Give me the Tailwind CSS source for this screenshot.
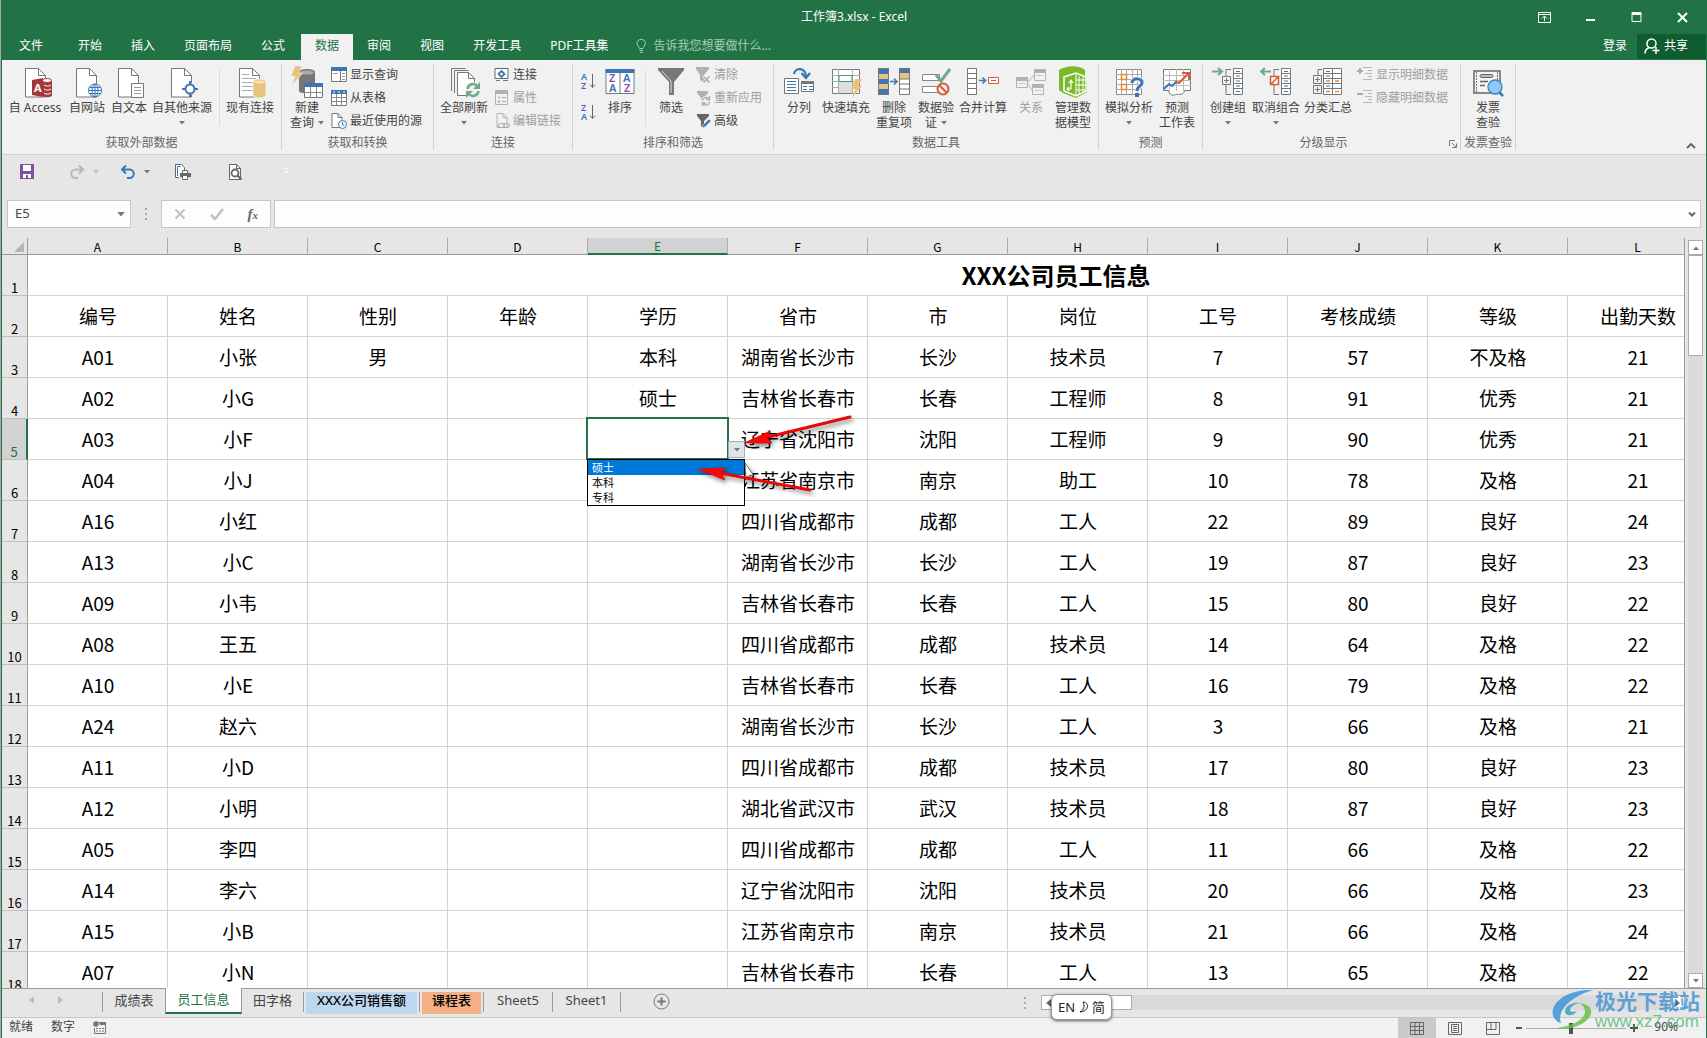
<!DOCTYPE html>
<html lang="zh-CN">
<head>
<meta charset="utf-8">
<title>工作簿3.xlsx - Excel</title>
<script src="https://cdn.jsdelivr.net/npm/@tailwindcss/browser@4"></script>
</head>
<body class="h-screen overflow-hidden bg-[#a9a9a9] pl-px font-['Noto_Sans','Noto_Sans_CJK_SC',sans-serif] text-xs text-[#444]">

<svg class="hidden" aria-hidden="true">
  <symbol id="doc" viewBox="0 0 22 30"><path d="M.5.5h13l7 7v21.500h-20z" fill="#fff" stroke="#777"/><path d="M13.500.5v7h7" fill="none" stroke="#777"/></symbol>
  <symbol id="down" viewBox="0 0 6 4"><path d="M0 0h6L3 3.500z" fill="#777"/></symbol>
  <symbol id="list" viewBox="0 0 10 28"><path d="M.5.5h9v26h-9z" fill="#fff" stroke="#777"/><path d="M0 5.500h10M0 10.500h10M0 15.500h10M0 20.500h10" stroke="#777"/></symbol>
</svg>

<div class="relative flex h-full flex-col border-x border-[#217346] bg-[#e6e6e6]">

  <!-- title bar -->
  <header class="bg-[#217346] text-white">
    <div class="grid h-[34px] grid-cols-[1fr_auto_1fr] items-center">
      <span></span>
      <h1 class="leading-4">工作簿3.xlsx - Excel</h1>
      <div class="flex justify-end gap-[6px] pr-1">
        <button class="grid h-8 w-10 place-items-center" aria-label="功能区显示选项"><svg class="h-[11px] w-[13px]" viewBox="0 0 13 11" fill="none" stroke="#fff"><path d="M.5.5h12v10H.5zM.5 2.500h12M6.500 9V4.500M4 6.500l2.500-2.500L9 6.500"/></svg></button>
        <button class="grid h-8 w-10 place-items-center" aria-label="最小化"><svg class="h-[11px] w-[11px]" viewBox="0 0 11 11"><path d="M1 7h9v2H1z" fill="#fff"/></svg></button>
        <button class="grid h-8 w-10 place-items-center" aria-label="最大化"><svg class="h-[11px] w-[11px]" viewBox="0 0 11 11"><path d="M1 .5h9v9H1zM1 2h9" fill="none" stroke="#fff"/><path d="M1 0h9v3H1z" fill="#fff"/></svg></button>
        <button class="grid h-8 w-10 place-items-center" aria-label="关闭"><svg class="h-[11px] w-[11px]" viewBox="0 0 11 11"><path d="M1 1l9 9M10 1l-9 9" stroke="#fff" stroke-width="2"/></svg></button>
      </div>
    </div>
    <nav class="flex h-[26px] items-stretch leading-[21px] *:pb-[3px]">
      <button class="pr-[21px] pl-[17px]">文件</button>
      <button class="pr-[15px] pl-[14px]">开始</button>
      <button class="pr-[15px] pl-[14px]">插入</button>
      <button class="pr-[15px] pl-[14px]">页面布局</button>
      <button class="pr-[15px] pl-[14px]">公式</button>
      <button class="ml-px bg-[#f1f1f1] px-[14px] text-[#217346]">数据</button>
      <button class="pr-[15px] pl-[14px]">审阅</button>
      <button class="pr-[15px] pl-[14px]">视图</button>
      <button class="pr-[15px] pl-[14px]">开发工具</button>
      <button class="pr-[15px] pl-[14px]">PDF工具集</button>
      <label class="flex items-center gap-[6px] pl-[13px]">
        <svg class="h-[14px] w-[11px]" viewBox="0 0 11 14" fill="none" stroke="#a6d0b7"><path d="M3.500 9.500C3.500 7.500 1 7 1 4.500a4.200 4 0 0 1 8.400 0C9.400 7 7 7.500 7 9.500zM3.500 11.500H7M4 13.500h2.500"/></svg>
        <input class="w-[130px] text-xs text-white placeholder:text-[#a6d0b7] outline-none" placeholder="告诉我您想要做什么..." aria-label="告诉我您想要做什么">
      </label>
      <div class="ml-auto flex">
        <button class="px-[10px]">登录</button>
        <button class="-mb-[2px] flex w-[69px] items-center gap-1 bg-[#0e5c2f] pb-[2px] pl-[7px]">
          <svg class="h-4 w-4" viewBox="0 0 16 16" fill="none" stroke="#fff" stroke-width="1.500"><circle cx="7.500" cy="5.500" r="4.500"/><path d="M1 15.500c0-3.500 2-5 4-6M12 9v7M8.500 12.500h7"/></svg>共享</button>
      </div>
    </nav>
  </header>

  <!-- ribbon -->
  <div class="flex h-[95px] border-b border-[#d2d2d2] bg-[#f1f1f1] leading-[15px] whitespace-nowrap">

    <section class="my-1 flex w-[280px] flex-col border-r border-[#d2d2d2]">
      <div class="flex h-[73px] gap-[2px] pt-[2px] pl-[3px]">
        <button class="flex w-[60px] flex-col items-center gap-[2px]">
          <svg class="h-8 w-8 overflow-visible" viewBox="0 0 32 32"><use href="#doc" x="6" y="2" width="22" height="30"/><path d="M24 15v14c0 3 9 3 9 0V15" fill="#a4373a"/><path d="M23 13.500h8v17h-8z" fill="#a4373a"/><ellipse cx="28" cy="14.500" rx="4.500" ry="2" fill="#fff" stroke="#a4373a"/><path d="M25 19c2 1.500 5 1.500 7 0M25 23c2 1.500 5 1.500 7 0M25 27c2 1.500 5 1.500 7 0" stroke="#fff" fill="none"/><path d="M13 14l11-2v19l-11-2z" fill="#a4373a"/><text x="15" y="26" font-size="11" font-weight="700" fill="#fff">A</text></svg>
          <span>自 Access</span></button>
        <button class="flex w-10 flex-col items-center gap-[2px]">
          <svg class="h-8 w-8" viewBox="0 0 32 32"><use href="#doc" x="5" y="2" width="22" height="30"/><circle cx="24" cy="24.500" r="6.500" fill="#fff" stroke="#3c76b4"/><ellipse cx="24" cy="24.500" rx="3" ry="6.500" fill="none" stroke="#3c76b4"/><path d="M17.500 24.500h13M24 18v13M18.500 21.500h11M18.500 27.500h11" stroke="#3c76b4"/></svg>
          <span>自网站</span></button>
        <button class="flex w-10 flex-col items-center gap-[2px]">
          <svg class="h-8 w-8" viewBox="0 0 32 32"><use href="#doc" x="5" y="2" width="22" height="30"/><path d="M18.500 17.500h12v14h-12z" fill="#fff" stroke="#777"/><path d="M21 21.500h7M21 24.500h7M21 27.500h7" stroke="#999"/></svg>
          <span>自文本</span></button>
        <button class="flex w-[62px] flex-col items-center gap-[2px]">
          <svg class="h-8 w-8" viewBox="0 0 32 32"><use href="#doc" x="5" y="2" width="22" height="30"/><circle cx="24" cy="23" r="6" fill="#f1f1f1"/><circle cx="24" cy="23" r="4.500" fill="#fff" stroke="#3c76b4" stroke-width="2"/><path d="M24 15v4M24 27v4M16 23h4M28 23h4" stroke="#3c76b4" stroke-width="2"/></svg>
          <span>自其他来源</span><svg class="mt-1 h-1 w-[6px]"><use href="#down"/></svg></button>
        <span class="mx-1 mt-1 h-14 w-px bg-[#dcdcdc]"></span>
        <button class="flex w-12 flex-col items-center gap-[2px]">
          <svg class="h-8 w-8" viewBox="0 0 32 32"><use href="#doc" x="5" y="2" width="22" height="30"/><path d="M8 8.500h7M8 12.500h14M8 16.500h14M8 20.500h11M8 24.500h11" stroke="#aaa"/><path d="M19 16c0-4 13-4 13 0v13c0 4-13 4-13 0z" fill="#eac37a" stroke="#f1f1f1"/><ellipse cx="25.500" cy="16" rx="5" ry="1.500" fill="#f8e2b4"/></svg>
          <span>现有连接</span></button>
      </div>
      <h2 class="text-center text-[#666]">获取外部数据</h2>
    </section>

    <section class="my-1 flex w-[152px] flex-col border-r border-[#d2d2d2]">
      <div class="flex h-[73px] pl-[3px]">
        <button class="flex w-[44px] flex-col items-center gap-[2px] pt-[2px]">
          <svg class="h-8 w-8" viewBox="0 0 32 32"><path d="M8 6c0-4 16-4 16 0v19c0 3-16 3-16 0z" fill="#777"/><ellipse cx="16" cy="6.500" rx="7" ry="2" fill="#aaa"/><path d="M4 0h7L8 7h4L1 19l3-9H0z" fill="#eac37a" stroke="#f1f1f1" stroke-width=".5"/><path d="M13.500 17.500h18v14h-18z" fill="#fff" stroke="#777"/><path d="M13 17h19v4H13z" fill="#3c76b4"/><path d="M13 26.500h19M19.500 21v11M25.500 21v11" stroke="#888"/></svg>
          <span>新建</span><span class="-mt-[2px] flex items-center gap-1">查询<svg class="h-1 w-[6px]"><use href="#down"/></svg></span></button>
        <div class="-mt-px flex flex-col pl-[2px]">
          <button class="flex h-[23px] items-center gap-[3px]"><svg class="h-4 w-4" viewBox="0 0 16 16"><path d="M.5.5h15v14H.5z" fill="#fff" stroke="#777"/><path d="M0 0h16v4H0z" fill="#3c76b4"/><path d="M9.500 4v11" stroke="#777"/><path d="M2 6.500h5M11 6.500h3M11 9.500h3M11 12.500h3" stroke="#999"/></svg>显示查询</button>
          <button class="flex h-[23px] items-center gap-[3px]"><svg class="h-4 w-4" viewBox="0 0 16 16"><path d="M.5.5h15v15H.5z" fill="#fff" stroke="#777"/><path d="M0 0h16v4H0z" fill="#3c76b4"/><path d="M2 2h2M7 2h2M12 2h2" stroke="#fff"/><path d="M0 7.500h16M0 11.500h16M5.500 4v12M10.500 4v12" stroke="#888"/></svg>从表格</button>
          <button class="flex h-[23px] items-center gap-[3px]"><svg class="h-4 w-4" viewBox="0 0 16 16"><path d="M1 .5h6l4 4v10H1z" fill="#fff" stroke="#777"/><path d="M7 .5v4h4" fill="none" stroke="#777"/><circle cx="11.500" cy="11.500" r="4" fill="#fff" stroke="#3c76b4"/><path d="M11.500 9v3h2" fill="none" stroke="#3c76b4"/></svg>最近使用的源</button>
        </div>
      </div>
      <h2 class="text-center text-[#666]">获取和转换</h2>
    </section>

    <section class="my-1 flex w-[139px] flex-col border-r border-[#d2d2d2]">
      <div class="flex h-[73px] pl-[5px]">
        <button class="flex w-[50px] flex-col items-center gap-[2px] pt-[2px]">
          <svg class="h-8 w-8" viewBox="0 0 32 32"><path d="M3.500 25V2.500h14" fill="none" stroke="#777"/><path d="M6.500 27V4.500h14" fill="none" stroke="#777"/><path d="M9.500 6.500h11l6 6v17h-17z" fill="#fff" stroke="#777"/><path d="M20.500 6.500v6h6" fill="none" stroke="#777"/><circle cx="25" cy="24" r="8" fill="#f1f1f1"/><path d="M19.500 23a5.500 5.500 0 0 1 10-2.500M30.500 25a5.500 5.500 0 0 1-10 2.500" fill="none" stroke="#72a98d" stroke-width="2.500"/><path d="M32 16v7h-7zM18 32v-7h7z" fill="#72a98d"/></svg>
          <span>全部刷新</span><svg class="mt-1 h-1 w-[6px]"><use href="#down"/></svg></button>
        <div class="-mt-px flex flex-col pl-[5px]">
          <button class="flex h-[23px] items-center gap-[3px]"><svg class="h-4 w-4" viewBox="0 0 16 16"><path d="M1 1.500h13v10H1z" fill="#fff" stroke="#666"/><path d="M2 13.500h4M9 13.500h5" stroke="#777"/><path d="M7.500 4l3 3-3 3-3-3z" fill="none" stroke="#3c76b4" stroke-width="1.800"/></svg>连接</button>
          <button class="flex h-[23px] items-center gap-[3px] text-[#a0a0a0]"><svg class="h-4 w-4" viewBox="0 0 16 16"><path d="M1.500.5h12v14h-12z" fill="#f6f0f6" stroke="#b5b0b5"/><path d="M1 0h13v4H1z" fill="#b5b0b5"/><path d="M8 7.500h4M8 11.500h4" stroke="#aaa"/><circle cx="5" cy="7.500" r="1" fill="#aaa"/><circle cx="5" cy="11.500" r="1" fill="none" stroke="#aaa"/></svg>属性</button>
          <button class="flex h-[23px] items-center gap-[3px] text-[#a0a0a0]"><svg class="h-4 w-4" viewBox="0 0 16 16"><path d="M3 .5h6l4 4v10H3z" fill="#f6eef6" stroke="#b5b0b5"/><path d="M9 .5v4h4" fill="none" stroke="#b5b0b5"/><rect x="4.500" y="10.500" width="6" height="4" rx="2" fill="#f1f1f1" stroke="#a5a5a5"/><rect x="9.500" y="10.500" width="6" height="4" rx="2" fill="none" stroke="#a5a5a5"/></svg>编辑链接</button>
        </div>
      </div>
      <h2 class="text-center text-[#666]">连接</h2>
    </section>

    <section class="my-1 flex w-[201px] flex-col border-r border-[#d2d2d2]">
      <div class="flex h-[73px] pl-2">
        <div class="flex w-4 flex-col gap-[15px] pt-[9px]">
          <button aria-label="升序"><svg class="h-4 w-4 overflow-visible" viewBox="0 0 16 16"><text x="0" y="7" font-size="9" font-weight="600" fill="#3c76b4">A</text><text x="0" y="16" font-size="9" font-weight="600" fill="#8a50a8">Z</text><path d="M11.500 1v13M9 11.500l2.500 3 2.500-3" fill="none" stroke="#666"/></svg></button>
          <button aria-label="降序"><svg class="h-4 w-4 overflow-visible" viewBox="0 0 16 16"><text x="0" y="7" font-size="9" font-weight="600" fill="#8a50a8">Z</text><text x="0" y="16" font-size="9" font-weight="600" fill="#3c76b4">A</text><path d="M11.500 1v13M9 11.500l2.500 3 2.500-3" fill="none" stroke="#666"/></svg></button>
        </div>
        <button class="flex w-[46px] flex-col items-center gap-[2px] pt-[2px]">
          <svg class="h-8 w-8" viewBox="0 0 32 32"><path d="M2 3.500h28v24H2z" fill="#fff" stroke="#777"/><path d="M1.500 3h29v4h-29z" fill="#3c76b4"/><path d="M16 7v20" stroke="#777"/><g font-size="11" font-weight="600"><text x="5" y="16" fill="#8a50a8">Z</text><text x="5" y="26" fill="#3c76b4">A</text><text x="19" y="16" fill="#3c76b4">A</text><text x="20" y="26" fill="#8a50a8">Z</text></g></svg>
          <span>排序</span></button>
        <span class="mt-[6px] mr-[5px] ml-[2px] h-14 w-px bg-[#dcdcdc]"></span>
        <button class="flex w-10 flex-col items-center gap-[2px] pt-[2px]">
          <svg class="h-8 w-8" viewBox="0 0 32 32"><path d="M3 2h26v2L19 16v13h-5V16L3 4z" fill="#777"/><path d="M7 5l9 10v12" fill="none" stroke="#ddd"/></svg>
          <span>筛选</span></button>
        <div class="-mt-px flex flex-col pl-1">
          <button class="flex h-[23px] items-center gap-[3px] text-[#a0a0a0]"><svg class="h-4 w-4" viewBox="0 0 16 16"><path d="M1 0h13v2L9 8v7l-4-2V8L1 2z" fill="#b0b0b0"/><path d="M8 9l7 7M15 9l-7 7" stroke="#f1f1f1" stroke-width="3"/><path d="M8.500 9.500l6 6M14.500 9.500l-6 6" stroke="#aaa" stroke-width="1.500"/></svg>清除</button>
          <button class="flex h-[23px] items-center gap-[3px] text-[#a0a0a0]"><svg class="h-4 w-4" viewBox="0 0 16 16"><path d="M2 1h11v2L9 8v6l-3-1V8L2 3z" fill="#b0b0b0"/><circle cx="11" cy="11" r="5" fill="#f1f1f1"/><path d="M7.500 10.500a3.500 3.500 0 0 1 6-2M14.500 11.500a3.500 3.500 0 0 1-6 2.500M14.500 6v3.500H11M7.500 16v-3H11" fill="none" stroke="#aaa" stroke-width="1.300"/></svg>重新应用</button>
          <button class="flex h-[23px] items-center gap-[3px]"><svg class="h-4 w-4" viewBox="0 0 16 16"><path d="M2 1h12v2L9 8v7l-3-2V8L2 3z" fill="#666"/><path d="M7 15l1-3 6-6 2 2-6 6z" fill="#3c76b4" stroke="#f1f1f1" stroke-width=".6"/></svg>高级</button>
        </div>
      </div>
      <h2 class="text-center text-[#666]">排序和筛选</h2>
    </section>

    <section class="my-1 flex w-[325px] flex-col border-r border-[#d2d2d2]">
      <div class="flex h-[73px] pt-[2px] pl-[7px]">
        <button class="flex w-9 flex-col items-center gap-[2px]">
          <svg class="h-8 w-8" viewBox="0 0 32 32"><path d="M1.500 12.500h14v15h-14z" fill="#fff" stroke="#777"/><path d="M4 15.500h9M4 18.500h9M4 21.500h9M4 24.500h9" stroke="#3c76b4"/><path d="M18.500 15.500h12v10h-12z" fill="#fff" stroke="#777"/><path d="M18 15h13v3H18z" fill="#777"/><path d="M20 20.500h4M26 20.500h4M20 23.500h4M26 23.500h4" stroke="#3c76b4"/><path d="M11 8c1-7 12-7 12 3M18.500 7l4.500 5 4-5" fill="none" stroke="#3c76b4" stroke-width="2.200"/></svg>
          <span>分列</span></button>
        <button class="flex w-[58px] flex-col items-center gap-[2px]">
          <svg class="h-8 w-8" viewBox="0 0 32 32"><path d="M2.500 3.500h27v24h-27z" fill="#fff" stroke="#777"/><path d="M2 9.500h28M2 15.500h28M2 21.500h28M8.500 3v25M22.500 3v25" stroke="#aaa"/><path d="M9 16h13v11H9z" fill="#ddd"/><path d="M9 9.500h13v6H9z" fill="#fff" stroke="#3f9a78"/><path d="M25 13h7l-4 7h4l-10 12 3-9h-4z" fill="#eac37a"/></svg>
          <span>快速填充</span></button>
        <button class="flex w-[38px] flex-col items-center gap-[2px]">
          <svg class="h-8 w-8" viewBox="0 0 32 32"><path d="M0 2h11v27H0z" fill="#3c76b4"/><path d="M0 8h11v5H0zM0 18h11v5H0z" fill="#eac37a"/><path d="M.5 2.500h10v26H.5z" fill="none" stroke="#777"/><path d="M21 2h11v5H21z" fill="#3c76b4"/><path d="M21 7h11v6H21z" fill="#eac37a"/><path d="M21 13h11v15H21z" fill="#fff"/><path d="M21.500 2.500h10v26h-10zM21 13h11M21 18h11M21 23h11" fill="none" stroke="#777"/><path d="M12 15.500h7M16 12.500l3 3-3 3" fill="none" stroke="#3c76b4" stroke-width="1.600"/></svg>
          <span class="text-center">删除<br>重复项</span></button>
        <button class="flex w-[46px] flex-col items-center gap-[2px]">
          <svg class="h-8 w-8" viewBox="0 0 32 32"><path d="M2.500 8.500h17v6h-17zM2.500 20.500h17v6h-17z" fill="#fff" stroke="#888"/><path d="M16 9l5 6 9-12" fill="none" stroke="#72a98d" stroke-width="3"/><circle cx="23" cy="23" r="5.500" fill="#f1f1f1" stroke="#d8593b" stroke-width="2"/><path d="M19 19l8 8" stroke="#d8593b" stroke-width="2"/></svg>
          <span>数据验</span><span class="-mt-[2px] flex items-center gap-1">证<svg class="h-1 w-[6px]"><use href="#down"/></svg></span></button>
        <button class="flex w-12 flex-col items-center gap-[2px]">
          <svg class="h-8 w-8" viewBox="0 0 32 32"><use href="#list" x="0" y="2" width="10" height="28"/><path d="M12 14.500h6M15.500 11.500l3 3-3 3" fill="none" stroke="#3c76b4" stroke-width="1.600"/><path d="M21.500 11.500h10v6h-10z" fill="#fff" stroke="#d8593b"/><path d="M24 14.500h5" stroke="#d8593b"/></svg>
          <span>合并计算</span></button>
        <button class="flex w-12 flex-col items-center gap-[2px] text-[#a0a0a0]">
          <svg class="h-8 w-8" viewBox="0 0 32 32"><g fill="#f6f0f6" stroke="#b5b0b5"><path d="M12 17l8-9M12 17l6 8"/><path d="M1.500 11.500h11v10h-11zM19.500 3.500h11v11h-11zM17.500 18.500h11v10h-11z"/></g><path d="M1 11h12v4H1zM19 3h12v4H19zM17 18h12v4H17z" fill="#b5b0b5"/><path d="M3 17.500h8M21 9.500h7M19 24.500h7" stroke="#c8c4c8"/></svg>
          <span>关系</span></button>
        <button class="flex w-9 flex-col items-center gap-[2px]">
          <svg class="h-8 w-8" viewBox="0 0 32 32"><path d="M2 4c8-5 20-5 26 0v6l2 2v14l-11 6-13-5-4-3z" fill="#7aba28"/><path d="M7 11l12-4 10 4v14l-10 5-12-5z" fill="#7aba28" stroke="#fff" stroke-width="1.500"/><path d="M19 8v21M22 10v18M26 11v15M19 14h10M19 19h10M19 24h9" stroke="#fff"/><path d="M11 23h3v-8M12 17l2-3 2 3M12 21l-2 2 2 2" stroke="#fff" fill="none" stroke-width="1.200"/></svg>
          <span class="text-center">管理数<br>据模型</span></button>
      </div>
      <h2 class="text-center text-[#666]">数据工具</h2>
    </section>

    <section class="my-1 flex w-[104px] flex-col border-r border-[#d2d2d2]">
      <div class="flex h-[73px] pt-[2px] pl-[5px]">
        <button class="flex w-[50px] flex-col items-center gap-[2px]">
          <svg class="h-8 w-8" viewBox="0 0 32 32"><path d="M3.500 3.500h25v25h-25z" fill="#fff" stroke="#888"/><path d="M3 8.500h26M3 13.500h26M3 18.500h26M3 23.500h26M8.500 3v26M13.500 3v26M19.500 3v26M24.500 3v26" stroke="#aaa"/><path d="M8.500 8.500h5v5h-5zM8.500 18.500h5v5h-5z" fill="#fff" stroke="#e08a3c" stroke-width="1.500"/><path d="M19 17c0-6 11-5 10 0 0 3-5 4-5 9" fill="none" stroke="#f1f1f1" stroke-width="5"/><path d="M19 17c0-6 11-5 10 0 0 3-5 3-5 8" fill="none" stroke="#3c76b4" stroke-width="3"/><path d="M22 27h4v4h-4z" fill="#3c76b4"/></svg>
          <span>模拟分析</span><svg class="mt-1 h-1 w-[6px]"><use href="#down"/></svg></button>
        <button class="flex w-[46px] flex-col items-center gap-[2px]">
          <svg class="h-8 w-8" viewBox="0 0 32 32"><path d="M2.500 3.500h27v21h-6c-1 6-8 3-9 4-4 2-6 0-7-4h-5z" fill="#fff" stroke="#777"/><path d="M2 9.500h28M2 14.500h28M2 19.500h28M8.500 3v22M15.500 3v22M22.500 3v22" stroke="#bbb"/><path d="M3 23l5-5 3 2 5-5" fill="none" stroke="#3c76b4" stroke-width="2"/><path d="M15 16l3 1 9-9M21 7h7v7" fill="none" stroke="#d8593b" stroke-width="2"/></svg>
          <span class="text-center">预测<br>工作表</span></button>
      </div>
      <h2 class="text-center text-[#666]">预测</h2>
    </section>

    <section class="my-1 flex w-[258px] flex-col border-r border-[#d2d2d2]">
      <div class="flex h-[73px] pl-[3px]">
        <button class="flex w-11 flex-col items-center gap-[2px] pt-[2px]">
          <svg class="h-8 w-8" viewBox="0 0 32 32"><path d="M0 5.500h9M6 2l4 3.500L6 9" fill="none" stroke="#72a98d" stroke-width="2.200"/><path d="M19 3.500h-5V10M14 19v9.500h5" fill="none" stroke="#777"/><path d="M10.500 10.500h8v8h-8zM12 14.500h5M14.500 12v5" fill="none" stroke="#777"/><use href="#list" x="21" y="2" width="10" height="28"/><path d="M24 5.500h4M24 10h4M24 15h4M24 20h4M24 25.500h4" stroke="#3c76b4"/></svg>
          <span>创建组</span><svg class="mt-1 h-1 w-[6px]"><use href="#down"/></svg></button>
        <button class="flex w-[52px] flex-col items-center gap-[2px] pt-[2px]">
          <svg class="h-8 w-8" viewBox="0 0 32 32"><path d="M11 5.500H2M5 2L1 5.500 5 9" fill="none" stroke="#72a98d" stroke-width="2.200"/><path d="M19 3.500h-5V10M14 19v9.500h5" fill="none" stroke="#777"/><path d="M10.500 10.500h8v8h-8zM11 18l7-7" fill="#fff" stroke="#d8593b" stroke-width="1.500"/><use href="#list" x="21" y="2" width="10" height="28"/><path d="M24 5.500h4M24 10h4M24 15h4M24 20h4M24 25.500h4" stroke="#3c76b4"/></svg>
          <span>取消组合</span><svg class="mt-1 h-1 w-[6px]"><use href="#down"/></svg></button>
        <button class="flex w-[52px] flex-col items-center gap-[2px] pt-[2px]">
          <svg class="h-8 w-8" viewBox="0 0 32 32"><path d="M10 3.500H6V9" fill="none" stroke="#777"/><path d="M1.500 9.500h8v8h-8zM1.500 19.500h8v8h-8zM3 13.500h5M5.500 11v5M3 23.500h5M5.500 21v5" fill="none" stroke="#777"/><use href="#list" x="11" y="2" width="10" height="28"/><use href="#list" x="20" y="2" width="10" height="28"/><path d="M14 5.500h4M14 10h4M14 20h4" stroke="#3c76b4"/><path d="M14 15h4M14 25.500h4M23 15h4M23 25.500h4" stroke="#e08a3c" stroke-width="1.500"/></svg>
          <span>分类汇总</span></button>
        <div class="-mt-px flex flex-col pl-[3px] text-[#a0a0a0]">
          <button class="flex h-[23px] items-center gap-[3px]"><svg class="h-4 w-4" viewBox="0 0 16 16"><path d="M0 4h6M3 1v6" stroke="#aaa" stroke-width="2"/><path d="M6 .5h9M11 3.500h4M8 6.500h7M11 9.500h4M6 12.500h9" stroke="#b5b5b5"/></svg>显示明细数据</button>
          <button class="flex h-[23px] items-center gap-[3px]"><svg class="h-4 w-4" viewBox="0 0 16 16"><path d="M0 4h6" stroke="#aaa" stroke-width="2"/><path d="M6 .5h9M11 3.500h4M8 6.500h7M11 9.500h4M6 12.500h9" stroke="#b5b5b5"/></svg>隐藏明细数据</button>
        </div>
      </div>
      <div class="grid grid-cols-[1fr_auto_1fr]">
        <h2 class="col-start-2 pr-4 text-[#666]">分级显示</h2>
        <button class="mt-[3px] mr-[3px] justify-self-end" aria-label="分级显示设置"><svg class="h-2 w-2" viewBox="0 0 8 8" fill="none" stroke="#777"><path d="M.5 6V.5H6M3 3l4 4M7.500 3.500v4h-4"/></svg></button>
      </div>
    </section>

    <section class="my-1 flex w-[55px] flex-col border-r border-[#d2d2d2]">
      <div class="flex h-[73px] justify-center pt-[2px]">
        <button class="flex flex-col items-center gap-[2px]">
          <svg class="h-8 w-8" viewBox="0 0 32 32"><path d="M2 5h26v22H2z" fill="#f4f4f4" stroke="#666" stroke-width="1.500"/><path d="M4.500 6v20M25.500 6v20" stroke="#777" stroke-dasharray="2 1"/><rect x="8" y="8.500" width="13" height="3" rx="1.500" fill="#bbb" stroke="#666"/><path d="M8 15.500h8M8 19.500h5" stroke="#666" stroke-width="1.500"/><path d="M27 26l4 4" stroke="#3579ad" stroke-width="2.500"/><circle cx="23" cy="21" r="7" fill="#92c5f7" stroke="#3a86b8" stroke-width="1.300"/></svg>
          <span class="text-center">发票<br>查验</span></button>
      </div>
      <h2 class="text-center text-[#666]">发票查验</h2>
    </section>
    <button class="mt-auto mr-[10px] mb-[5px] ml-auto" aria-label="折叠功能区"><svg class="h-[6px] w-[10px]" viewBox="0 0 10 6" fill="none" stroke="#666" stroke-width="2"><path d="M1 5l4-4 4 4"/></svg></button>
  </div>

  <!-- quick access bar -->
  <div class="flex h-[35px] items-center pb-[2px] pl-[18px] text-[#666]">
    <button aria-label="保存"><svg class="h-[15px] w-[14px]" viewBox="0 0 14 15"><path d="M0 0h14v15H0z" fill="#8250a0"/><path d="M3 1h8v6H3zM3 10h8v4H3z" fill="#fff"/><path d="M6 11h2v3H6z" fill="#8250a0"/></svg></button>
    <button class="ml-9 flex items-center gap-[9px] opacity-60" aria-label="恢复"><svg class="h-[14px] w-[14px]" viewBox="0 0 14 14" fill="none" stroke="#999" stroke-width="2"><path d="M8 13H5.500a4 4 0 0 1 0-8.500H13M9 .5l4 4-4 4"/></svg><svg class="h-1 w-[6px] opacity-60"><use href="#down"/></svg></button>
    <button class="ml-[22px] flex items-center gap-[9px]" aria-label="撤消"><svg class="h-[14px] w-[14px]" viewBox="0 0 14 14" fill="none" stroke="#3c76b4" stroke-width="2"><path d="M6 13h2.500a4 4 0 0 0 0-8.500H1M5 .5l-4 4 4 4"/></svg><svg class="h-1 w-[6px]"><use href="#down"/></svg></button>
    <button class="ml-6" aria-label="快速打印"><svg class="h-4 w-[17px]" viewBox="0 0 17 16" fill="none" stroke="#666"><path d="M5 13.500H1.500V.5h6l3 3v4" fill="#fff"/><path d="M3.500 12V3" stroke="#3c76b4"/><path d="M3.500 2.500h3" stroke="#3c76b4"/><path d="M6 9h11v4H6z" fill="#666" stroke="none"/><path d="M8.500 6.500h5v3h-5zM8.500 11.500h5v4h-5z" fill="#fff"/></svg></button>
    <button class="ml-9" aria-label="打印预览"><svg class="h-4 w-4" viewBox="0 0 16 16" fill="none" stroke="#666"><path d="M2.500.5h7l4 4v11h-11z" fill="#fff"/><path d="M9.500.5v4h4"/><circle cx="8" cy="9" r="3.500" stroke-width="1.800"/><path d="M10.500 11.500l4 4" stroke-width="2.200"/></svg></button>
    <button class="ml-10" aria-label="自定义快速访问工具栏"><svg class="h-[7px] w-[6px]" viewBox="0 0 6 7"><path d="M0 0h6v1H0zM0 3h6L3 6z" fill="#f6f6f6"/></svg></button>
  </div>

  <!-- formula bar -->
  <div class="flex h-[48px] items-start pt-[10px] pr-[5px] pl-[5px]">
    <div class="flex h-7 w-[124px] items-center border border-[#c6c6c6] bg-[#fdfdfd] pr-[5px] pl-[7px]">
      <input class="w-full min-w-0 text-[13px] outline-none" value="E5" aria-label="名称框">
      <button aria-label="名称列表"><svg class="h-[5px] w-2"><use href="#down"/></svg></button>
    </div>
    <svg class="mt-2 ml-[14px] h-3 w-[2px]" viewBox="0 0 2 12"><path d="M0 0h2v2H0zM0 5h2v2H0zM0 10h2v2H0z" fill="#aaa"/></svg>
    <div class="ml-[14px] flex h-7 w-[110px] items-center justify-around border border-[#c6c6c6] bg-[#fdfdfd]">
      <button aria-label="取消"><svg class="h-3 w-3" viewBox="0 0 12 12"><path d="M1.500 1.500l9 9M10.500 1.500l-9 9" stroke="#c0c0c0" stroke-width="2"/></svg></button>
      <button aria-label="输入"><svg class="h-3 w-[14px]" viewBox="0 0 14 12"><path d="M1 7l4 4 8-10" fill="none" stroke="#c0c0c0" stroke-width="2.500"/></svg></button>
      <button class="font-['Liberation_Serif',serif] text-[15px] leading-4 font-bold text-[#666] italic" aria-label="插入函数">f<span class="text-[11px]">x</span></button>
    </div>
    <div class="ml-[3px] flex h-7 flex-1 items-center border border-[#c6c6c6] bg-[#fdfdfd] pr-1">
      <input class="w-full text-[13px] outline-none" aria-label="编辑栏">
      <button aria-label="展开编辑栏"><svg class="h-[5px] w-2" viewBox="0 0 8 5" fill="none" stroke="#666" stroke-width="2"><path d="M1 .5l3 3 3-3"/></svg></button>
    </div>
  </div>

  <!-- worksheet -->
  <div class="flex min-h-0 flex-1 border-b border-[#9b9b9b]">
    <main class="min-w-0 flex-1 overflow-hidden border-r border-[#9b9b9b]">
      <table class="w-[2082px] table-fixed border-separate border-spacing-0 text-center font-['Noto_Sans_CJK_SC',sans-serif] text-[19px] leading-[27px] whitespace-nowrap text-black">
        <colgroup>
          <col class="w-[26px]"><col span="12" class="w-[140px]"><col>
        </colgroup>
        <thead id="heads" class="text-xs leading-4"></thead>
        <tbody id="rows" class="bg-white"></tbody>
      </table>
    </main>
    <div class="mt-[2px] mr-[3px] ml-[3px] flex w-[15px] flex-col bg-[#dadada]">
      <button class="grid h-[15px] place-items-center border border-[#ababab] bg-white" aria-label="向上滚动"><svg class="h-1 w-[6px] rotate-180"><use href="#down"/></svg></button>
      <div class="h-[101px] border border-[#ababab] bg-white"></div>
      <button class="mt-auto grid h-[15px] place-items-center border border-[#ababab] bg-white" aria-label="向下滚动"><svg class="h-1 w-[6px]"><use href="#down"/></svg></button>
    </div>
  </div>

  <!-- sheet tabs -->
  <div class="flex h-7 items-start text-[13px] leading-[22px]">
    <div class="flex h-full w-[100px] items-center gap-6 pb-[6px] pl-[27px] text-[#bdbdbd]">
      <button aria-label="上一张工作表"><svg class="h-2 w-[5px]" viewBox="0 0 5 8"><path d="M5 0v8L0 4z" fill="currentColor"/></svg></button>
      <button aria-label="下一张工作表"><svg class="h-2 w-[5px]" viewBox="0 0 5 8"><path d="M0 0v8l5-4z" fill="currentColor"/></svg></button>
    </div>
    <button class="mt-[3px] h-5 w-[63px] border-l border-[#9b9b9b] pb-1 leading-4">成绩表</button>
    <button class="-mt-px h-[26px] w-[77px] border-x border-b-2 border-x-[#9b9b9b] border-b-[#217346] bg-white pb-[2px] text-[#217346]">员工信息</button>
    <button class="mt-[3px] h-5 w-[62px] border-r border-[#9b9b9b] pb-1 leading-4">田字格</button>
    <div class="mx-[2px] mt-[3px] flex h-[22px] gap-[2px] leading-4 text-black">
      <button class="w-[111px] bg-[#bdd7ee] pb-[6px] font-medium">XXX公司销售额</button>
      <span class="h-5 w-px bg-[#9b9b9b]"></span>
      <button class="w-[59px] bg-[#f4b084] pb-[6px] font-medium">课程表</button>
    </div>
    <button class="mt-[3px] h-5 w-[70px] border-x border-[#9b9b9b] pb-1 leading-4">Sheet5</button>
    <button class="mt-[3px] h-5 w-[68px] border-r border-[#9b9b9b] pb-1 leading-4">Sheet1</button>
    <button class="mt-1 ml-8" aria-label="新工作表"><svg class="h-[17px] w-[17px]" viewBox="0 0 17 17" fill="none" stroke="#777"><circle cx="8.500" cy="8.500" r="7.500"/><path d="M8.500 4.500v8M4.500 8.500h8" stroke-width="2"/></svg></button>
    <svg class="mt-2 ml-auto h-3 w-[2px]" viewBox="0 0 2 12"><path d="M0 0h2v2H0zM0 5h2v2H0zM0 10h2v2H0z" fill="#aaa"/></svg>
    <div class="relative mt-[6px] mr-[21px] ml-[15px] flex h-[15px] w-[644px] bg-[#dadada] text-[#666]">
      <button class="grid w-[15px] place-items-center border border-[#ababab] bg-white" aria-label="向左滚动"><svg class="h-2 w-[5px]" viewBox="0 0 5 8"><path d="M5 0v8L0 4z" fill="currentColor"/></svg></button>
      <div class="w-[76px] border border-l-0 border-[#ababab] bg-white"></div>
      <button class="ml-auto grid w-[15px] place-items-center border border-[#ababab] bg-white" aria-label="向右滚动"><svg class="h-2 w-[5px]" viewBox="0 0 5 8"><path d="M0 0v8l5-4z" fill="currentColor"/></svg></button>
      <div class="absolute -top-px left-[10px] z-10 flex h-[26px] w-[61px] items-center justify-center gap-[3px] rounded-md border border-[#999] bg-white text-[13px] text-[#222] shadow-[0_1px_3px_rgba(0,0,0,0.6)]">EN <svg class="h-3 w-[11px]" viewBox="0 0 11 12" fill="none" stroke="#222"><path d="M5 1c6 0 7 9-3 10 4-2 5-6 3-10z"/></svg> 简</div>
    </div>
  </div>

  <!-- status bar -->
  <footer class="flex h-[21px] items-stretch border-t border-[#c6c6c6] bg-[#f1f1f1] pl-[7px] leading-[18px]">
    <span>就绪</span><span class="ml-[18px]">数字</span>
    <svg class="mt-[3px] ml-[18px] h-[13px] w-[13px]" viewBox="0 0 13 13" fill="none" stroke="#777"><path d="M6 1.500h6.500v11h-11V7"/><path d="M6 1h7v3H7z" fill="#777" stroke="none"/><circle cx="3" cy="3" r="2.800" fill="#777" stroke="none"/><path d="M3 7.500h8M3 10h8" stroke-dasharray="2 1"/></svg>
    <div class="ml-auto flex">
      <button class="grid w-[38px] place-items-center bg-[#cacaca]" aria-label="普通"><svg class="h-[13px] w-[14px]" viewBox="0 0 14 13" fill="none" stroke="#666"><path d="M.5.5h13v12H.5zM.5 4.500h13M.5 8.500h13M5 .5v12M9.500.5v12"/></svg></button>
      <button class="grid w-[38px] place-items-center" aria-label="页面布局"><svg class="h-[13px] w-[14px]" viewBox="0 0 14 13" fill="none" stroke="#666"><path d="M.5.5h13v12H.5zM3.500 2.500h7v8h-7zM5 4.500h4M5 6.500h4M5 8.500h4"/></svg></button>
      <button class="grid w-[38px] place-items-center" aria-label="分页预览"><svg class="h-[13px] w-[14px]" viewBox="0 0 14 13" fill="none" stroke="#666"><path d="M.5.5h13v12H.5zM5 .5v7h5v-7M5 7.500H.5"/></svg></button>
      <button class="grid w-[14px] place-items-center" aria-label="缩小"><span class="h-[2px] w-[6px] bg-[#555]"></span></button>
      <input type="range" min="10" max="190" value="90" aria-label="显示比例" class="h-5 w-[100px] appearance-none bg-[linear-gradient(#aaa,#aaa)] bg-[length:100%_1px] bg-center bg-no-repeat [&::-webkit-slider-thumb]:h-[11px] [&::-webkit-slider-thumb]:w-1 [&::-webkit-slider-thumb]:appearance-none [&::-webkit-slider-thumb]:bg-[#555]">
      <button class="grid w-4 place-items-center" aria-label="放大"><svg class="h-2 w-2" viewBox="0 0 8 8"><path d="M4 0v8M0 4h8" stroke="#555" stroke-width="2"/></svg></button>
      <span class="mr-7 ml-3">90%</span>
    </div>
  </footer>

  <!-- annotation arrows over the sheet -->
  <svg class="pointer-events-none absolute top-[410px] left-[688px] z-30 h-[90px] w-[170px] drop-shadow-[2px_3px_2px_rgba(0,0,0,0.45)]" viewBox="0 0 170 90">
    <path d="M55 53l9 13 -4-1-4 3z" fill="#fff" stroke="#333" stroke-width=".7"/>
    <path d="M160 7L78 27" stroke="#e80808" stroke-width="3" stroke-linecap="round"/>
    <path d="M54 33l26-12-3 7 5 5z" fill="#f80808" stroke="#e00" stroke-width=".7"/>
    <path d="M120 80L30 63" stroke="#e80808" stroke-width="3" stroke-linecap="round"/>
    <path d="M8 59l28-1-5 5 4 7z" fill="#f80808" stroke="#e00" stroke-width=".7"/>
  </svg>

  <!-- site watermark -->
  <div class="pointer-events-none absolute right-[6px] bottom-2 flex items-start gap-px">
    <svg class="h-[40px] w-[42px]" viewBox="0 0 42 40"><path d="M41 1C22 0 5 8 1 20c-2 7 3 13 8 14-3-8 2-18 14-25C29 5 35 3 41 1z" fill="#3c96d8" opacity=".85"/><path d="M28 14c12 2 14 9 8 16C29 38 14 41 5 39c12-2 21-5 26-11 3-4 3-9-3-14z" fill="#6cbf4a" opacity=".85"/><path d="M28 14c-8-1-15 3-15 9 1 5 9 4 12-1-4 1-7 1-7-1 1-4 5-6 10-7z" fill="#3ca0c8" opacity=".85"/></svg>
    <div class="flex flex-col items-start">
      <span class="h-[25px] text-[21px] leading-[25px] font-bold text-[#3f8fd6]/80">极光下载站</span>
      <span class="h-4 font-['Liberation_Sans',sans-serif] text-[17px] leading-4 text-[#4cb86c]/80">www.xz7.com</span>
    </div>
  </div>
</div>

<script>
  const letters = 'ABCDEFGHIJKL'.split('');
  const data = [
    ['编号','姓名','性别','年龄','学历','省市','市','岗位','工号','考核成绩','等级','出勤天数'],
    ['A01','小张','男','','本科','湖南省长沙市','长沙','技术员','7','57','不及格','21'],
    ['A02','小G','','','硕士','吉林省长春市','长春','工程师','8','91','优秀','21'],
    ['A03','小F','','','','辽宁省沈阳市','沈阳','工程师','9','90','优秀','21'],
    ['A04','小J','','','','江苏省南京市','南京','助工','10','78','及格','21'],
    ['A16','小红','','','','四川省成都市','成都','工人','22','89','良好','24'],
    ['A13','小C','','','','湖南省长沙市','长沙','工人','19','87','良好','23'],
    ['A09','小韦','','','','吉林省长春市','长春','工人','15','80','良好','22'],
    ['A08','王五','','','','四川省成都市','成都','技术员','14','64','及格','22'],
    ['A10','小E','','','','吉林省长春市','长春','工人','16','79','及格','22'],
    ['A24','赵六','','','','湖南省长沙市','长沙','工人','3','66','及格','21'],
    ['A11','小D','','','','四川省成都市','成都','技术员','17','80','良好','23'],
    ['A12','小明','','','','湖北省武汉市','武汉','技术员','18','87','良好','23'],
    ['A05','李四','','','','四川省成都市','成都','工人','11','66','及格','22'],
    ['A14','李六','','','','辽宁省沈阳市','沈阳','技术员','20','66','及格','23'],
    ['A15','小B','','','','江苏省南京市','南京','技术员','21','66','及格','24'],
    ['A07','小N','','','','吉林省长春市','长春','工人','13','65','及格','22'],
  ];
  const corner = `<th class="h-[17px] border-r border-b border-[#9b9b9b] p-0"><svg class="mt-px ml-auto mr-[3px] h-[10px] w-[10px]" viewBox="0 0 10 10"><path d="M10 0v10H0z" fill="#b5b5b5"/></svg></th>`;
  document.getElementById('heads').innerHTML = '<tr>' + corner + letters.map(l => l === 'E'
    ? `<th scope="col" class="h-[17px] border-r border-b-2 border-r-[#ababab] border-b-[#217346] bg-[#d2d2d2] p-0 align-bottom leading-[14px] font-normal text-[#217346]">E</th>`
    : `<th scope="col" class="h-[17px] border-r border-b border-r-[#ababab] border-b-[#9b9b9b] p-0 align-bottom leading-[15px] font-normal">${l}</th>`).join('') + '<th class="border-b border-[#9b9b9b] p-0"></th></tr>';

  const picker = `
    <div class="absolute -top-[2px] -left-[2px] z-10 h-[43px] w-[143px] border-2 border-[#217346]"></div>
    <button class="absolute top-[22px] left-[140px] z-10 grid h-[17px] w-[17px] place-items-center border border-[#a5acb8] bg-[#dfe3ea]" aria-label="选择学历"><svg class="h-1 w-[6px]"><use href="#down"/></svg></button>
    <ul role="listbox" aria-label="学历" class="absolute top-10 -left-px z-20 w-[158px] border border-black bg-white text-left text-[11px] leading-[15px]">
      <li role="option" aria-selected="true" class="bg-[#0078d7] pl-1 text-white">硕士</li>
      <li role="option" class="pl-1">本科</li>
      <li role="option" class="pl-1">专科</li>
    </ul>`;
  const rowHead = n => n === 5
    ? `<th scope="row" class="h-[41px] border-r-2 border-b border-r-[#217346] border-b-[#c0c0c0] bg-[#d2d2d2] p-0 align-bottom text-[13px] leading-[14px] font-normal text-[#217346]">5</th>`
    : `<th scope="row" class="h-[41px] border-r border-b border-r-[#9b9b9b] border-b-[#c0c0c0] bg-[#e6e6e6] p-0 align-bottom text-[13px] leading-[14px] font-normal">${n}</th>`;
  let html = `<tr>${rowHead(1)}<td colspan="13" class="border-b border-[#d4d4d4] p-0 pb-[2px] text-[24px] font-bold">XXX公司员工信息</td></tr>`;
  data.forEach((r, i) => {
    const n = i + 2;
    html += '<tr>' + rowHead(n) + r.map((v, c) => n === 5 && c === 4
      ? `<td class="border-r border-b border-[#d4d4d4] p-0"><div class="relative h-10">${picker}</div></td>`
      : `<td class="border-r border-b border-[#d4d4d4] p-0 pb-[2px] pl-px">${v}</td>`).join('') + '<td class="border-b border-[#d4d4d4] p-0"></td></tr>';
  });
  document.getElementById('rows').innerHTML = html;
</script>
</body>
</html>
